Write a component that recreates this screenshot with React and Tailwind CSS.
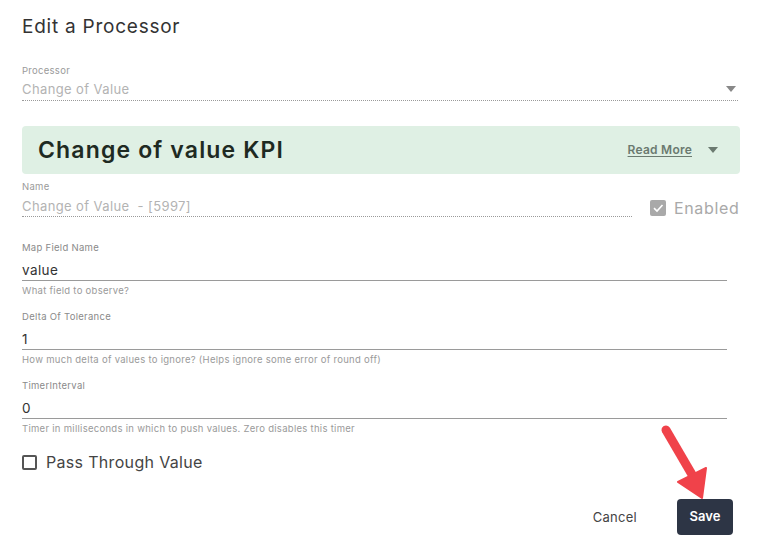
import React from "react";

const FONT = { fontFamily: "Inter, 'Liberation Sans', sans-serif" };

const Caret = ({ className = "" }) => (
  <svg width="10" height="6" viewBox="0 0 10 6" className={className}>
    <path d="M0 0 L10 0 L5 6 Z" fill="currentColor" />
  </svg>
);

const Field = ({ label, value, hint }) => (
  <div className="mr-[13px]">
    <div className="text-[9.5px] tracking-[0.03em] text-[#8a8a8a] leading-[12px]">{label}</div>
    <div className="mt-[6px] h-[21px] text-[13.5px] tracking-[0.03em] text-[#333] leading-[20px] border-b border-[#9a9a9a]">
      {value}
    </div>
    <div className="mt-[4px] text-[9.5px] tracking-[0.03em] text-[#9a9a9a] leading-[12px]">{hint}</div>
  </div>
);

export default function App() {
  return (
    <div className="relative w-[759px] h-[548px] bg-white pl-[22px] pr-[19px] pt-[14px]" style={FONT}>
      <h1 className="text-[19px] tracking-[0.04em] text-[#333] leading-[26px]">Edit a Processor</h1>

      {/* processor select */}
      <div className="mt-[25px] pr-[2px]">
        <div className="text-[9.5px] tracking-[0.03em] text-[#9a9a9a] leading-[12px]">Processor</div>
        <div className="mt-[2px] flex items-start justify-between h-[22px] pt-[1px] border-b border-dotted border-[#9a9a9a]">
          <span className="text-[13px] tracking-[0.03em] text-[#b3b3b3]">Change of Value</span>
          <Caret className="text-[#888] mr-[2px] mt-[6px]" />
        </div>
      </div>

      {/* kpi banner */}
      <div className="mt-[25px] h-[48px] rounded-[4px] bg-[#dff0e4] flex items-center pl-[16px] pr-[22px]">
        <span className="text-[23px] tracking-[0.05em] font-semibold text-[#1e2a22]">Change of value KPI</span>
        <span className="ml-auto text-[12px] tracking-[0.02em] font-semibold text-[#6b7a70] underline underline-offset-2">
          Read More
        </span>
        <Caret className="ml-[16px] text-[#6b7a70]" />
      </div>

      {/* name + enabled */}
      <div className="mt-[7px] flex items-end">
        <div className="w-[610px]">
          <div className="text-[9.5px] tracking-[0.03em] text-[#9a9a9a] leading-[12px]">Name</div>
          <div className="mt-[3px] h-[21px] leading-[20px] text-[13px] tracking-[0.03em] text-[#b3b3b3] border-b border-dotted border-[#9a9a9a] whitespace-pre">
            Change of Value  - [5997]
          </div>
        </div>
        <div className="ml-[18px] -mb-[3px] flex items-center gap-[8px]">
          <span className="w-[16px] h-[16px] rounded-[2px] bg-[#a9a9a9] flex items-center justify-center">
            <svg width="12" height="12" viewBox="0 0 12 12">
              <path d="M2 6.2 L5 9 L10.5 3" stroke="white" strokeWidth="1.6" fill="none" />
            </svg>
          </span>
          <span className="text-[16px] tracking-[0.04em] text-[#a9a9a9]">Enabled</span>
        </div>
      </div>

      <div className="mt-[25px] flex flex-col gap-[14px]">
        <Field label="Map Field Name" value="value" hint="What field to observe?" />
        <Field
          label="Delta Of Tolerance"
          value="1"
          hint="How much delta of values to ignore? (Helps ignore some error of round off)"
        />
        <Field
          label="TimerInterval"
          value="0"
          hint="Timer in milliseconds in which to push values. Zero disables this timer"
        />
      </div>

      <div className="mt-[15px] flex items-center gap-[9px]">
        <span className="w-[15px] h-[15px] border-2 border-[#555] rounded-[2px]" />
        <span className="text-[16px] tracking-[0.02em] text-[#444]">Pass Through Value</span>
      </div>

      <div className="mt-[25px] mr-[7px] flex items-center justify-end">
        <span className="text-[13px] tracking-[0.02em] text-[#444] mr-[40px] mt-[2px]">Cancel</span>
        <button className="w-[56px] h-[36px] rounded-[4px] bg-[#2d3545] text-white text-[13px] font-semibold">
          Save
        </button>
      </div>

      {/* red annotation arrow */}
      <svg className="absolute left-[650px] top-[418px]" width="70" height="84" viewBox="0 0 70 84">
        <path d="M16 12 L44 60" stroke="#f0424a" strokeWidth="9" strokeLinecap="round" />
        <path d="M28 64 L52 80 L56 50 Z" fill="#f0424a" stroke="#f0424a" strokeWidth="2" strokeLinejoin="round" />
      </svg>
    </div>
  );
}
